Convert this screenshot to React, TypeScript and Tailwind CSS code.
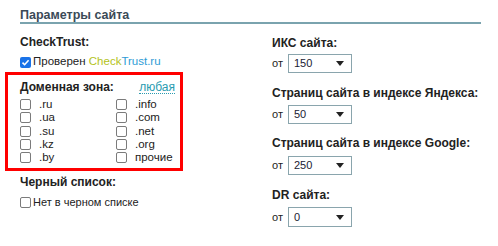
import React from 'react';

const font = { fontFamily: '"Liberation Sans", Arial, sans-serif' };

function Box({ checked = false }: { checked?: boolean }) {
  if (checked) {
    return (
      <span className="w-[11px] h-[11px] rounded-[2px] bg-[#1a73e8] flex items-center justify-center shrink-0">
        <svg width="9" height="9" viewBox="0 0 9 9">
          <path d="M1.5 4.6 L3.6 6.7 L7.6 2.2" stroke="white" strokeWidth="1.6" fill="none" />
        </svg>
      </span>
    );
  }
  return <span className="w-[11px] h-[11px] rounded-[2px] border border-[#7b7b7b] bg-white shrink-0" />;
}

function Zone({ label }: { label: string }) {
  return (
    <div className="flex items-center h-[13.25px]">
      <Box />
      <span className="ml-[8px] text-[11.5px] leading-[13px] text-[#222]">{label}</span>
    </div>
  );
}

function Select({ value }: { value: string }) {
  return (
    <div className="flex items-center h-full">
      <span className="w-[16px] text-[11px] text-[#222]">от</span>
      <div className="w-[64px] h-full border border-[#8aa5ad] flex items-center justify-between pl-[5px] pr-[7px]">
        <span className="text-[11px] text-[#1a1a33]">{value}</span>
        <span className="w-0 h-0 border-l-[4px] border-r-[4px] border-t-[5px] border-l-transparent border-r-transparent border-t-[#222]" />
      </div>
    </div>
  );
}

const label = 'text-[12px] font-bold text-[#222] leading-[16px] whitespace-nowrap';

export default function App() {
  const left = ['.ru', '.ua', '.su', '.kz', '.by'];
  const right = ['.info', '.com', '.net', '.org', 'прочие'];
  return (
    <div className="w-[498px] h-[246px] bg-white pl-5 pt-[8px] overflow-hidden" style={font}>
      {/* Header */}
      <div className="w-[461px] border-b-2 border-[#7aa3ae]">
        <h2 className="text-[12.5px] font-bold text-[#3b4a57] leading-[14px]">Параметры сайта</h2>
      </div>

      <div className="flex">
        {/* Left column */}
        <div className="w-[252px]">
          <div className={`mt-[10px] ${label}`}>CheckTrust:</div>
          <div className="mt-[5px] flex items-center h-[14px]">
            <Box checked />
            <span className="ml-[2px] text-[11.5px] text-[#222] whitespace-nowrap">
              Проверен <span className="text-[#b3c31a]">Check</span><span className="text-[#2e9cd6]">Trust.ru</span>
            </span>
          </div>

          <div className="-ml-[15px] mt-[3px] w-[178px] h-[99px] border-[3px] border-[#ff0000] pl-[12px] pr-[5px] pt-[4px]">
            <div className="flex items-center justify-between">
              <span className={label}>Доменная зона:</span>
              <span className="text-[12px] text-[#2a9bb0] border-b border-dotted border-[#2a9bb0] leading-[12px]">любая</span>
            </div>
            <div className="mt-[3px] flex">
              <div className="w-[96px] flex flex-col">
                {left.map(l => (
                  <Zone key={l} label={l} />
                ))}
              </div>
              <div className="flex flex-col">
                {right.map(l => (
                  <Zone key={l} label={l} />
                ))}
              </div>
            </div>
          </div>

          <div className={`mt-[3px] ${label}`}>Черный список:</div>
          <div className="mt-[5.5px] flex items-center h-[14px]">
            <Box />
            <span className="ml-[2px] text-[11px] text-[#222] whitespace-nowrap">Нет в черном списке</span>
          </div>
        </div>

        {/* Right column */}
        <div className="pt-[11px]">
          <div className={label}>ИКС сайта:</div>
          <div className="mt-[3px] h-[19px]"><Select value="150" /></div>
          <div className={`mt-[12px] ${label}`}>Страниц сайта в индексе Яндекса:</div>
          <div className="mt-[4px] h-[19px]"><Select value="50" /></div>
          <div className={`mt-[11px] ${label}`}>Страниц сайта в индексе Google:</div>
          <div className="mt-[5px] h-[19px]"><Select value="250" /></div>
          <div className={`mt-[12px] ${label}`}>DR сайта:</div>
          <div className="mt-[4px] h-[20px]"><Select value="0" /></div>
        </div>
      </div>
    </div>
  );
}
